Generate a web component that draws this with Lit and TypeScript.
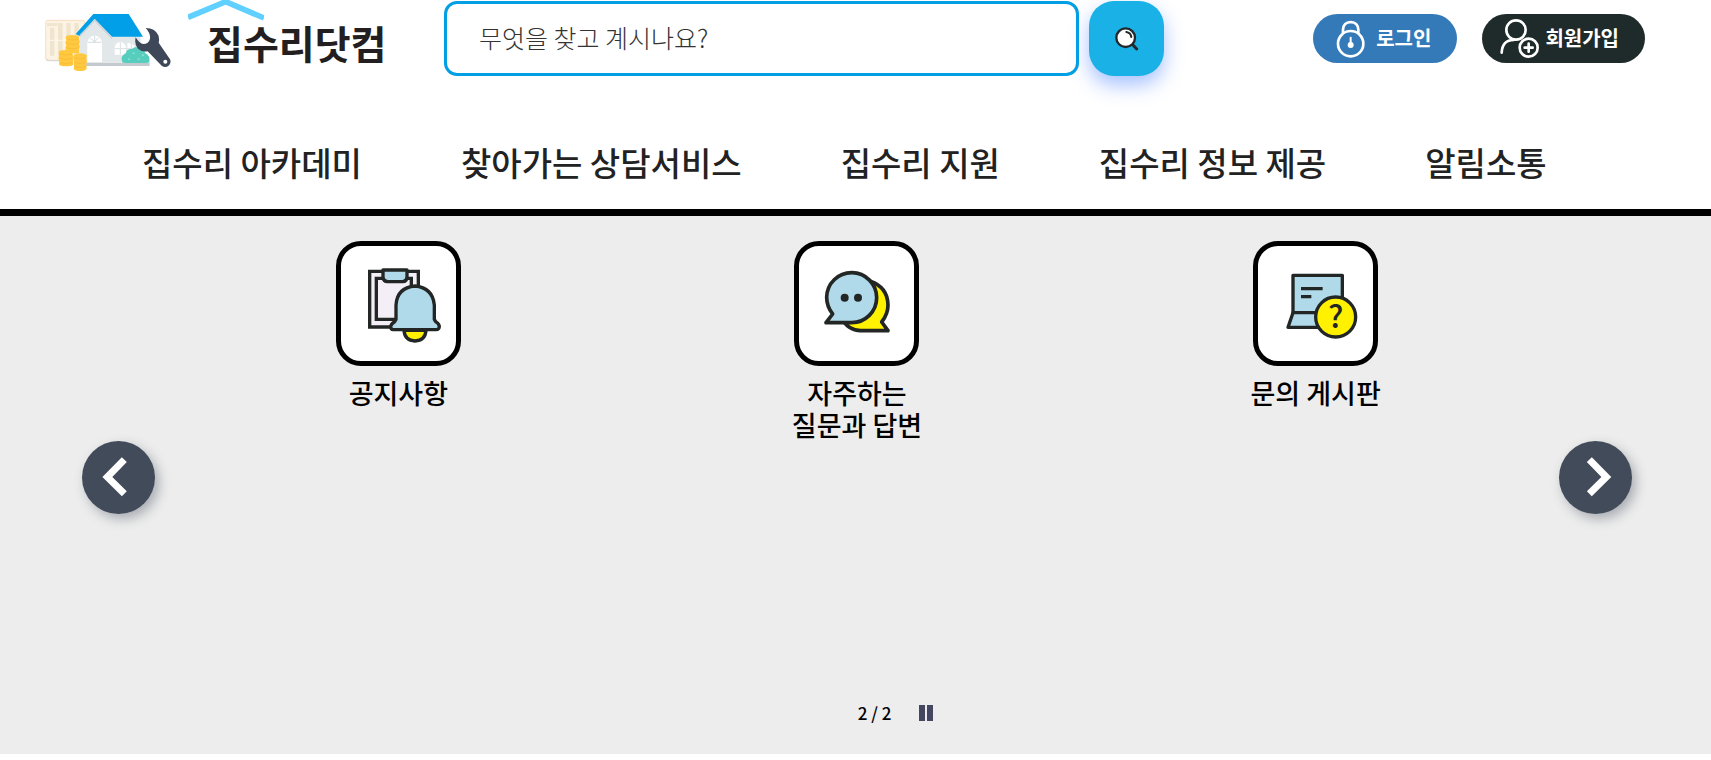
import { LitElement, html, css, svg } from "lit";
import { customElement, property, state } from "lit/decorators.js";

const INK = "#222625";

const houseIcon = html`<svg class="house" viewBox="45 36 378 180" aria-hidden="true">
  <rect x="47" y="61" width="118" height="120" rx="7" fill="#fdf3e4" stroke="#f9dcc0" stroke-width="3" />
  <path d="M48 178q4 4 12 4h90" stroke="#ddd8cf" stroke-width="4" fill="none" />
  <path d="M51 69h31v9h-31z" fill="#f1e5cf" />
  <path d="M60 83h13v84h-13zM84 69h14v98h-14zM109 69h13v98h-13zM133 69h13v98h-13z" fill="#efe4cd" />
  <path d="M48 121h116" stroke="#fff7ea" stroke-width="3" />
  <path d="M150 188h209v10h-209z" fill="#c3c9cc" />
  <path d="M149 100l45-46 51 54h87v80h-183z" fill="#e2e7e9" />
  <path d="M190 42h106l43 68h-93l-52-54-45 52-12-6z" fill="#009fe8" />
  <path d="M194 58l52 52v8l-52-54-45 48v-8z" fill="#cbd3d6" />
  <path d="M172 186v-57q2-21 22-22 20 1 22 22v57z" fill="#fff" />
  <path d="M174 127h40M194 108v18M181 113l12 13 13-13" stroke="#d4dcdf" stroke-width="3" fill="none" />
  <path d="M254 164v-20q1-17 17-18 16 1 17 18v20zM292 164v-35q23 0 24 20v15z" fill="#fff" />
  <path d="M254 146h60M271 127v36M304 130v30" stroke="#d9e0e3" stroke-width="3" />
  <path d="M277 187q-8-18 10-27 4-15 19-13 12-11 24-1 14 0 15 13 17 8 13 28-5 3-14 2h-54q-9 1-13-2z" fill="#57cdbd" />
  <g fill="#8de0d5"><circle cx="297" cy="178" r="3" /><circle cx="311" cy="160" r="3" /><circle cx="326" cy="177" r="3" /><circle cx="339" cy="166" r="3" /></g>
  <g fill="#ffc93f">
    <path d="M107 112q0-7 20-7t20 7v7l3 5-3 8 3 8-3 8 1 12h-40v-10l-2-7 3-8-3-8 3-7z" />
    <path d="M86 157q1-7 21-7t22 7l-1 8 3 8-2 9v12q-4 5-22 5t-20-6l1-10-3-8 2-8z" />
    <path d="M130 168q2-8 21-8t20 8l-2 7 2 8-2 8 1 15q-4 7-20 7t-19-7l1-9-2-7 2-8-2-8z" />
  </g>
  <path d="M110 117q18 7 36 0M110 130q18 7 36 0M110 143q18 7 36 0M90 162q17 7 36 0M90 175q17 7 36 0M90 188q17 7 36 0M134 174q17 7 34 0M134 187q17 7 34 0M134 199q17 7 34 0" stroke="#f5b534" stroke-width="2" fill="none" />
  <path d="M347 84q28 0 38 22 4 12 1 22l34 50q5 12-5 20-10 6-20-1l-42-43q-17 3-29-8-12-12-7-34 12 20 23 20 16 0 20-16 2-16-13-32z" fill="#3f4858" />
  <circle cx="406" cy="185" r="6" fill="#fff" />
</svg>`;

const lockIcon = html`<svg width="35" height="42" viewBox="129 54 105 126" fill="none" stroke="#fff" stroke-width="8" aria-hidden="true">
  <circle cx="182" cy="131" r="38" />
  <path d="M159 99v-10q1-22 23-23 22 1 23 23v10" />
  <path d="M182 113v24" stroke-width="6" stroke-linecap="round" />
  <circle cx="182" cy="135" r="5" />
</svg>`;

const joinIcon = html`<svg width="42" height="42" viewBox="624 54 126 126" fill="none" stroke="#fff" stroke-width="8" stroke-linecap="round" aria-hidden="true">
  <circle cx="678" cy="90" r="29" />
  <path d="M635 158q2-38 36-38" />
  <circle cx="716" cy="143" r="27" />
  <path d="M716 131v24M704 143h24" />
</svg>`;

const searchIcon = html`<svg width="24" height="24" viewBox="224 80 72 72" aria-hidden="true">
  <path d="M276 132l13 14" stroke="#22282a" stroke-width="9" stroke-linecap="round" />
  <circle cx="256" cy="112" r="28" fill="#fff" stroke="#22282a" stroke-width="7" />
  <path d="M258 95q13 2 15 15" fill="none" stroke="#22282a" stroke-width="6" stroke-linecap="round" />
</svg>`;

const noticeArt = svg`<g transform="translate(-63 -50)" stroke=${INK} stroke-width="10" stroke-linejoin="round">
  <path d="M149 126h146v167h-146z" fill="#f4eff6" stroke-linejoin="miter" />
  <path d="M169 147h105v123h-105z" fill="#f4eff6" stroke-linejoin="miter" />
  <path d="M189 122h72v21q-1 13-13 14h-45q-13-1-14-14z" fill="#b0d9ea" />
  <path d="M252 303q2 30 33 32 31-2 33-32z" fill="#fff100" />
  <path d="M220 301q-8-1-8-9 1-9 12-15l4-7v-43q3-52 57-57 53 5 58 57v43l4 7q11 7 11 15-1 9-9 9z" fill="#b0d9ea" />
</g>`;

const faqArt = svg`<g transform="translate(-57 -50)" stroke=${INK} stroke-width="11" stroke-linejoin="round">
  <path d="M271 156q52 18 53 71 0 27-19 51l19 26h-82q-39-1-58-39z" fill="#fff100" />
  <path d="M138 280l20-26q-18-22-18-50a75 75 0 1 1 75 76z" fill="#b0d9ea" />
  <g fill=${INK} stroke="none"><circle cx="194" cy="205" r="12" /><circle cx="234" cy="205" r="12" /></g>
</g>`;

const inquiryArt = svg`<g transform="translate(-54 -50)" stroke=${INK} stroke-width="10" stroke-linejoin="round">
  <path d="M159 138h148v112h-148z" fill="#b0d9ea" />
  <path d="M159 250h120v44h-135z" fill="#b0d9ea" />
  <path d="M183 178h65M183 202h31" />
  <circle cx="287" cy="263" r="60" fill="#fff100" />
  <text x="287" y="297" text-anchor="middle" fill=${INK} stroke="none" font-size="94" font-weight="500">?</text>
</g>`;

@customElement("icon-card")
class IconCard extends LitElement {
  @property() label = "";
  @property({ attribute: false }) art: unknown = null;

  static styles = css`
    :host {
      display: block;
    }
    .card {
      display: flex;
      flex-direction: column;
      align-items: center;
      gap: 11px;
      color: #000;
      text-decoration: none;
    }
    .frame {
      box-sizing: border-box;
      display: block;
      width: 125px;
      height: 125px;
      border: 5px solid #000;
      border-radius: 25px;
      background: #fff;
    }
    .art {
      display: block;
      width: 100%;
      height: 100%;
    }
    .label {
      font-size: 27px;
      font-weight: 500;
      line-height: 32px;
      text-align: center;
      white-space: pre-line;
    }
  `;

  render() {
    return html`<a class="card" href="#">
      <span class="frame"><svg class="art" viewBox="0 0 345 345" aria-hidden="true">${this.art}</svg></span>
      <span class="label">${this.label}</span>
    </a>`;
  }
}

@customElement("app-root")
class AppRoot extends LitElement {
  @state() private playing = true;

  private menu = ["집수리 아카데미", "찾아가는 상담서비스", "집수리 지원", "집수리 정보 제공", "알림소통"];

  private cards = [
    { label: "공지사항", art: noticeArt },
    { label: "자주하는\n질문과 답변", art: faqArt },
    { label: "문의 게시판", art: inquiryArt },
  ];

  static styles = css`
    :host {
      display: block;
      background: #fff;
      color: #222;
      font-family: "Noto Sans CJK KR", "Noto Sans", sans-serif;
    }
    a {
      color: inherit;
      text-decoration: none;
    }
    button {
      border: 0;
      padding: 0;
      font: inherit;
      cursor: pointer;
    }
    .top {
      display: flex;
      align-items: flex-start;
      padding: 1px 66px 0 45px;
    }
    .logo {
      display: flex;
      align-items: flex-start;
      flex: 0 0 399px;
      gap: 17px;
    }
    .house {
      width: 126px;
      height: 60px;
      margin-top: 11px;
    }
    .wordmark {
      position: relative;
      padding: 9px 0 0 19px;
      font-size: 39px;
      font-weight: 700;
      line-height: 64px;
      color: #231f20;
    }
    .roof {
      position: absolute;
      left: 0;
      top: -1px;
      width: 76px;
      height: 21px;
    }
    .search {
      display: flex;
      flex: 0 1 720px;
      gap: 10px;
    }
    .query {
      box-sizing: border-box;
      flex: 1;
      min-width: 0;
      height: 75px;
      border: 3px solid #029fe4;
      border-radius: 13px;
      padding: 0 32px 4px;
      background: #fff;
      font-family: inherit;
      font-size: 25px;
      font-weight: 300;
      color: #222;
    }
    .query::placeholder {
      color: #333;
      opacity: 1;
    }
    .go {
      display: flex;
      align-items: center;
      justify-content: center;
      width: 75px;
      height: 75px;
      border-radius: 25px;
      background: #1ab2e6;
      box-shadow: 0 9px 20px rgba(60, 120, 255, 0.45);
    }
    .account {
      display: flex;
      gap: 25px;
      margin-left: auto;
      padding-top: 13px;
    }
    .pill {
      display: flex;
      align-items: center;
      height: 49px;
      border-radius: 25px;
      color: #fff;
      font-size: 20px;
      font-weight: 700;
      line-height: 28px;
      white-space: nowrap;
    }
    .pill span {
      padding-bottom: 2px;
    }
    .login {
      gap: 8px;
      padding: 0 26px 0 20px;
      background: #357ab8;
    }
    .join {
      gap: 5px;
      padding: 0 26px 0 16px;
      background: #1f2a2a;
    }
    .menu {
      display: flex;
      gap: 99px;
      margin: 0;
      padding: 62px 60px 23px 142px;
      list-style: none;
      border-bottom: 7px solid #000;
      font-size: 33px;
      font-weight: 500;
      line-height: 48px;
      white-space: nowrap;
    }
    .carousel {
      padding: 25px 0 29px;
      background: #ededed;
    }
    .stage {
      display: grid;
      grid-template-columns: 73px 1fr 73px;
      gap: 14px;
      min-height: 449px;
      padding: 0 79px 0 82px;
    }
    .slides {
      display: grid;
      grid-template-columns: repeat(3, 1fr);
      align-items: start;
    }
    .arrow {
      display: flex;
      align-items: center;
      justify-content: center;
      width: 73px;
      height: 73px;
      margin-top: 200px;
      border-radius: 50%;
      background: #424b5a;
      box-shadow: 4px 5px 12px rgba(66, 75, 90, 0.4);
    }
    .pager {
      display: flex;
      align-items: center;
      justify-content: center;
      gap: 28px;
      padding: 11px 0 0 80px;
      color: #000;
      font-size: 17px;
      font-weight: 500;
      line-height: 24px;
    }
    .pause {
      display: flex;
      background: none;
    }
    .end {
      height: 6px;
    }
  `;

  render() {
    return html`
      <header>
        <div class="top">
          <a class="logo" href="#">
            ${houseIcon}
            <span class="wordmark">
              <svg class="roof" viewBox="0 0 228 63" aria-hidden="true">
                <path d="M0 52L113 5l115 49" fill="none" stroke="#5fd0ff" stroke-width="17" />
              </svg>집수리닷컴</span>
          </a>
          <form class="search" role="search" @submit=${(e: Event) => e.preventDefault()}>
            <input class="query" type="text" aria-label="검색어" placeholder="무엇을 찾고 계시나요?" />
            <button class="go" type="submit" aria-label="검색">${searchIcon}</button>
          </form>
          <div class="account">
            <a class="pill login" href="#">${lockIcon}<span>로그인</span></a>
            <a class="pill join" href="#">${joinIcon}<span>회원가입</span></a>
          </div>
        </div>
        <nav>
          <ul class="menu">
            ${this.menu.map((m) => html`<li><a href="#">${m}</a></li>`)}
          </ul>
        </nav>
      </header>
      <main>
        <section class="carousel">
          <div class="stage">
            <button class="arrow" type="button" aria-label="이전">
              <svg width="73" height="73" viewBox="66 62 219 219" fill="none" stroke="#fff" stroke-width="21"><path d="M193 118l-51 52 51 50" /></svg>
            </button>
            <div class="slides">
              ${this.cards.map((c) => html`<icon-card .label=${c.label} .art=${c.art}></icon-card>`)}
            </div>
            <button class="arrow" type="button" aria-label="다음">
              <svg width="73" height="73" viewBox="60 62 219 219" fill="none" stroke="#fff" stroke-width="21"><path d="M151 118l51 52-51 50" /></svg>
            </button>
          </div>
          <div class="pager">
            <span>2 / 2</span>
            <button class="pause" type="button" aria-label="일시정지" @click=${() => (this.playing = !this.playing)}>
              <svg width="14" height="16" viewBox="0 0 14 16" fill="#45465f">
                ${this.playing ? svg`<path d="M0 0h6v16h-6zM8 0h6v16h-6z" />` : svg`<path d="M0 0l14 8-14 8z" />`}
              </svg>
            </button>
          </div>
        </section>
        <div class="end"></div>
      </main>
    `;
  }
}
